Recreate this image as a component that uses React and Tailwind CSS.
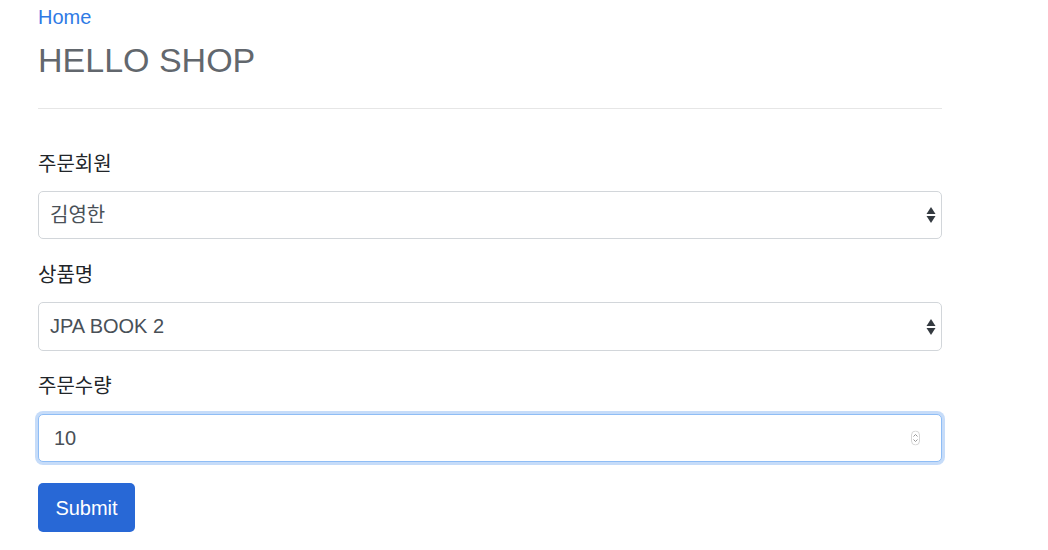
import React from 'react';

const font = { fontFamily: '"Liberation Sans", "Noto Sans CJK KR", Arial, sans-serif' };

const SelectArrows = () => (
  <svg className="absolute right-[4px] top-1/2 -translate-y-1/2" width="12" height="20" viewBox="0 0 12 20">
    <path d="M6 2 L10.5 9 L1.5 9 Z" fill="#343a40" />
    <path d="M6 18 L10.5 11 L1.5 11 Z" fill="#343a40" />
  </svg>
);

const Spinner = () => (
  <svg className="absolute right-[21px] top-1/2 -translate-y-1/2" width="9" height="15" viewBox="0 0 9 15">
    <rect x="0.5" y="0.5" width="8" height="14" rx="4" fill="#fff" stroke="#d6d6d6" />
    <path d="M2.5 6 L4.5 4 L6.5 6" fill="none" stroke="#8a8a8a" strokeWidth="0.9" />
    <path d="M2.5 9 L4.5 11 L6.5 9" fill="none" stroke="#8a8a8a" strokeWidth="0.9" />
  </svg>
);

const App = () => {
  return (
    <div className="min-h-screen bg-white text-[20px] text-[#212529]" style={font}>
      <div className="w-[904px] ml-[38px] pt-[3px]">
        <a className="block leading-[28px] text-[#2f7ae5]">Home</a>
        <h3 className="mt-[9px] text-[34px] leading-[41px] text-[#62676d]">HELLO SHOP</h3>
        <div className="mt-[27px] border-t border-[#e6e6e6]" />

        <form className="mt-[41px]">
          <label className="block leading-[28px]">주문회원</label>
          <div className="relative mt-[13px] h-[48px] rounded-[5px] border border-[#d2d6da] bg-white">
            <div className="pl-[11px] leading-[46px] text-[#495057]">김영한</div>
            <SelectArrows />
          </div>

          <label className="mt-[22px] block leading-[28px]">상품명</label>
          <div className="relative mt-[13px] h-[49px] rounded-[5px] border border-[#d2d6da] bg-white">
            <div className="pl-[11px] leading-[47px] text-[#495057]">JPA BOOK 2</div>
            <SelectArrows />
          </div>

          <label className="mt-[21px] block leading-[28px]">주문수량</label>
          <div className="relative mt-[14px] h-[48px] rounded-[5px] border border-[#8fbdf5] bg-white shadow-[0_0_0_3px_rgba(66,139,235,0.3)]">
            <div className="pl-[15px] leading-[46px] text-[#495057]">10</div>
            <Spinner />
          </div>

          <button
            type="button"
            className="mt-[21px] h-[49px] w-[97px] rounded-[5px] bg-[#2868d6] text-white"
          >
            Submit
          </button>
        </form>
      </div>
    </div>
  );
};

export default App;
